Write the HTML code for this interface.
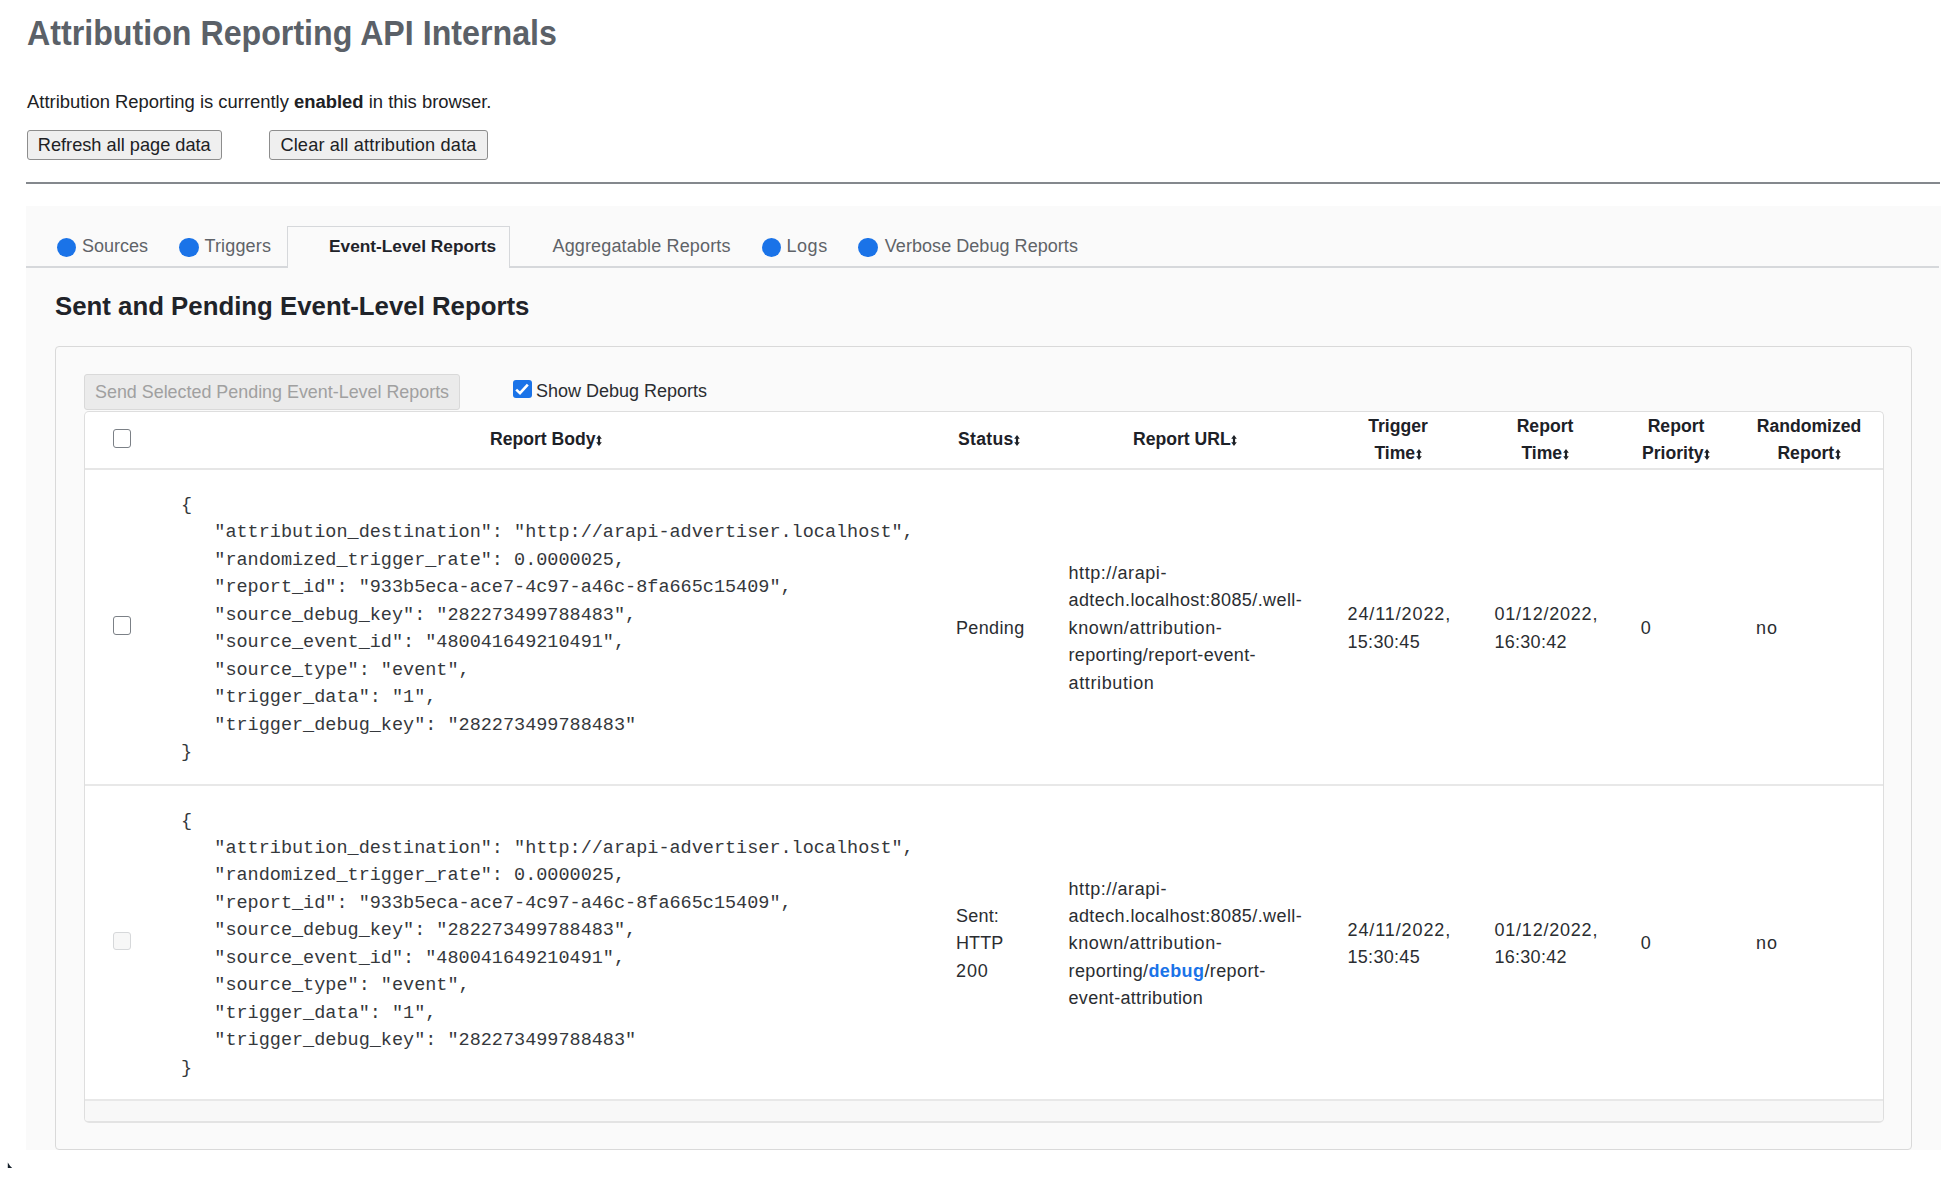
<!DOCTYPE html>
<html>
<head>
<meta charset="utf-8">
<style>
html,body{margin:0;padding:0;background:#fff;}
body{width:1948px;height:1178px;overflow:hidden;position:relative;font-family:"Liberation Sans",sans-serif;color:#202124;}
.abs{position:absolute;}
#title{left:27px;top:10px;font-size:32.2px;font-weight:bold;color:#5b6168;white-space:nowrap;line-height:48px;transform-origin:0 35px;transform:scaleY(1.09);}
#sub{left:27px;top:90px;font-size:18.42px;white-space:nowrap;line-height:24px;color:#202124;}
.btn{position:absolute;top:130px;height:29.5px;box-sizing:border-box;border:1.5px solid #8d8d8d;border-radius:3px;background:#efefef;font-size:18.2px;line-height:28px;text-align:center;white-space:nowrap;color:#202124;}
#hr{left:26px;top:182px;width:1914px;height:2px;background:#84888d;}
#grey{left:26px;top:206px;width:1914.5px;height:944px;background:#fafafa;}
#tabline{left:26px;top:266px;width:1913px;height:1.5px;background:#d6d8db;}
.tab{position:absolute;top:226px;height:41px;font-size:18px;line-height:41px;color:#5f6368;white-space:nowrap;}
.dot{position:absolute;top:11.5px;width:19.5px;height:19.5px;border-radius:50%;background:#1a73e8;}
#activetab{left:287px;top:226px;width:223px;box-sizing:border-box;border:1.5px solid #d6d8db;border-bottom:none;background:#fafafa;height:42px;}
#heading{left:55px;top:288px;font-size:25.8px;font-weight:bold;white-space:nowrap;line-height:36px;color:#1f2329;}
#container{left:55px;top:346px;width:1857px;height:804px;box-sizing:border-box;border:1.5px solid #d9d9d9;border-radius:4px;background:#fafafa;}
#sendbtn{left:84px;top:374px;width:376px;height:36px;box-sizing:border-box;border:1.5px solid #d9d9d9;border-radius:3px;background:#ebebeb;color:#a0a0a0;font-size:17.9px;line-height:34px;padding-left:10px;white-space:nowrap;}
#cb{left:513px;top:379.5px;width:18.5px;height:18.5px;box-sizing:border-box;border-radius:3px;background:#1a73e8;}
#showdbg{left:536px;top:378px;font-size:18px;line-height:26px;white-space:nowrap;color:#2a2d31;}
#table{left:84px;top:411px;width:1800px;height:712px;box-sizing:border-box;border:1.5px solid #dedede;border-bottom:2.5px solid #e3e3e3;border-radius:5px;background:#fff;overflow:hidden;}
.chk{position:absolute;width:18.2px;height:18.5px;box-sizing:border-box;border:1.8px solid #7b8086;border-radius:3px;background:#fff;}
.th{position:absolute;font-size:17.6px;font-weight:bold;line-height:27px;text-align:center;white-space:nowrap;color:#1d2127;}
.td{position:absolute;font-size:18px;line-height:27.4px;white-space:nowrap;color:#2a2d31;}
pre{position:absolute;margin:0;font-family:"Liberation Mono",monospace;font-size:18.5px;line-height:27.47px;color:#35383c;}
.hline{position:absolute;left:0;width:100%;height:2px;background:#e6e6e6;}
.arr{fill:#1d2127;margin-left:0.5px;vertical-align:-1px;}
</style>
</head>
<body>
<div id="title" class="abs">Attribution Reporting API Internals</div>
<div id="sub" class="abs">Attribution Reporting is currently <b>enabled</b> in this browser.</div>
<div class="btn" style="left:26.5px;width:195.5px;">Refresh all page data</div>
<div class="btn" style="left:269px;width:219px;letter-spacing:0.16px;">Clear all attribution data</div>
<div id="hr" class="abs"></div>
<div id="grey" class="abs"></div>
<div id="tabline" class="abs"></div>
<div id="activetab" class="abs"></div>
<div class="tab" style="left:40px;"><span class="dot" style="left:16.5px;"></span><span style="position:absolute;left:42px;">Sources</span></div>
<div class="tab" style="left:163px;"><span class="dot" style="left:16.2px;"></span><span style="position:absolute;left:41.5px;letter-spacing:0.15px">Triggers</span></div>
<div class="tab" style="left:287px;"><span style="position:absolute;left:42px;font-size:17.3px;font-weight:bold;color:#1f2329;">Event-Level Reports</span></div>
<div class="tab" style="left:511px;"><span style="position:absolute;left:41.5px;letter-spacing:0.15px">Aggregatable Reports</span></div>
<div class="tab" style="left:745px;"><span class="dot" style="left:16.5px;"></span><span style="position:absolute;left:41.6px;letter-spacing:0.5px">Logs</span></div>
<div class="tab" style="left:842px;"><span class="dot" style="left:16.3px;"></span><span style="position:absolute;left:42.8px;letter-spacing:0.05px">Verbose Debug Reports</span></div>
<div id="heading" class="abs">Sent and Pending Event-Level Reports</div>
<div id="container" class="abs"></div>
<div id="sendbtn" class="abs">Send Selected Pending Event-Level Reports</div>
<div id="cb" class="abs"><svg width="18" height="18" viewBox="0 0 18 18" style="position:absolute;left:0;top:0"><path d="M3.2 9.6 L7 13.2 L14.8 4.6" fill="none" stroke="#fff" stroke-width="2.6"/></svg></div>
<div id="showdbg" class="abs">Show Debug Reports</div>
<div id="table" class="abs">
<div class="chk" style="left:27.7px;top:17.1px;"></div>
<div class="th" style="left:405px;top:14px;">Report Body<svg class="arr" width="6" height="11" viewBox="0 0 6 11"><path d="M3 0L5.8 3.7H4.1V7.3H5.8L3 11L0.2 7.3H1.9V3.7H0.2Z"/></svg></div>
<div class="th" style="left:873px;top:14px;letter-spacing:0.3px;">Status<svg class="arr" width="6" height="11" viewBox="0 0 6 11"><path d="M3 0L5.8 3.7H4.1V7.3H5.8L3 11L0.2 7.3H1.9V3.7H0.2Z"/></svg></div>
<div class="th" style="left:1048px;top:14px;">Report URL<svg class="arr" width="6" height="11" viewBox="0 0 6 11"><path d="M3 0L5.8 3.7H4.1V7.3H5.8L3 11L0.2 7.3H1.9V3.7H0.2Z"/></svg></div>
<div class="th" style="left:1260px;top:1px;width:106px;">Trigger<br>Time<svg class="arr" width="6" height="11" viewBox="0 0 6 11"><path d="M3 0L5.8 3.7H4.1V7.3H5.8L3 11L0.2 7.3H1.9V3.7H0.2Z"/></svg></div>
<div class="th" style="left:1407px;top:1px;width:106px;">Report<br>Time<svg class="arr" width="6" height="11" viewBox="0 0 6 11"><path d="M3 0L5.8 3.7H4.1V7.3H5.8L3 11L0.2 7.3H1.9V3.7H0.2Z"/></svg></div>
<div class="th" style="left:1538px;top:1px;width:106px;">Report<br>Priority<svg class="arr" width="6" height="11" viewBox="0 0 6 11"><path d="M3 0L5.8 3.7H4.1V7.3H5.8L3 11L0.2 7.3H1.9V3.7H0.2Z"/></svg></div>
<div class="th" style="left:1664px;top:1px;width:120px;">Randomized<br>Report<svg class="arr" width="6" height="11" viewBox="0 0 6 11"><path d="M3 0L5.8 3.7H4.1V7.3H5.8L3 11L0.2 7.3H1.9V3.7H0.2Z"/></svg></div>
<div class="hline" style="top:56px;"></div>
<div class="chk" style="left:27.6px;top:204px;"></div>
<pre style="left:96px;top:80px;">{
   "attribution_destination": "http://arapi-advertiser.localhost",
   "randomized_trigger_rate": 0.0000025,
   "report_id": "933b5eca-ace7-4c97-a46c-8fa665c15409",
   "source_debug_key": "282273499788483",
   "source_event_id": "480041649210491",
   "source_type": "event",
   "trigger_data": "1",
   "trigger_debug_key": "282273499788483"
}</pre>
<div class="td" style="left:871px;top:202.8px;"><div style="letter-spacing:0.35px">Pending</div></div>
<div class="td" style="left:983.5px;top:148.0px;"><div style="letter-spacing:0.57px">http://arapi-</div><div style="letter-spacing:0.41px">adtech.localhost:8085/.well-</div><div style="letter-spacing:0.66px">known/attribution-</div><div style="letter-spacing:0.36px">reporting/report-event-</div><div style="letter-spacing:0.63px">attribution</div></div>
<div class="td" style="left:1262.5px;top:189.1px;"><div style="letter-spacing:0.9px">24/11/2022,</div><div style="letter-spacing:0.3px">15:30:45</div></div>
<div class="td" style="left:1409.5px;top:189.1px;"><div style="letter-spacing:0.78px">01/12/2022,</div><div style="letter-spacing:0.27px">16:30:42</div></div>
<div class="td" style="left:1555.8px;top:202.8px;">0</div>
<div class="td" style="left:1671px;top:202.8px;letter-spacing:1px;">no</div>
<div class="hline" style="top:372px;height:1.5px;background:#e8e8e8;"></div>
<div class="chk" style="left:27.6px;top:519.5px;border-color:#d6d8da;background:#f7f7f7;"></div>
<pre style="left:96px;top:395.5px;">{
   "attribution_destination": "http://arapi-advertiser.localhost",
   "randomized_trigger_rate": 0.0000025,
   "report_id": "933b5eca-ace7-4c97-a46c-8fa665c15409",
   "source_debug_key": "282273499788483",
   "source_event_id": "480041649210491",
   "source_type": "event",
   "trigger_data": "1",
   "trigger_debug_key": "282273499788483"
}</pre>
<div class="td" style="left:871px;top:490.9px;"><div style="letter-spacing:0.2px">Sent:</div><div style="letter-spacing:0.1px">HTTP</div><div style="letter-spacing:0.9px">200</div></div>
<div class="td" style="left:983.5px;top:463.5px;"><div style="letter-spacing:0.57px">http://arapi-</div><div style="letter-spacing:0.41px">adtech.localhost:8085/.well-</div><div style="letter-spacing:0.66px">known/attribution-</div><div style="letter-spacing:0.39px">reporting/<b style="color:#1a73e8">debug</b>/report-</div><div style="letter-spacing:0.32px">event-attribution</div></div>
<div class="td" style="left:1262.5px;top:504.6px;"><div style="letter-spacing:0.9px">24/11/2022,</div><div style="letter-spacing:0.3px">15:30:45</div></div>
<div class="td" style="left:1409.5px;top:504.6px;"><div style="letter-spacing:0.78px">01/12/2022,</div><div style="letter-spacing:0.27px">16:30:42</div></div>
<div class="td" style="left:1555.8px;top:518.3px;">0</div>
<div class="td" style="left:1671px;top:518.3px;letter-spacing:1px;">no</div>
<div class="hline" style="top:687.2px;height:1.5px;background:#e8e8e8;"></div>
<div style="position:absolute;left:0;top:688.7px;width:100%;height:21px;background:#f8f8f8;"></div>
</div>
<svg class="abs" style="left:7px;top:1162px" width="7" height="7" viewBox="0 0 7 7"><path d="M0.8 0.6 L0.8 5.9 L5.2 5.9 Q3 4.6 0.8 0.6 Z" fill="#15202b"/></svg>
</body>
</html>
